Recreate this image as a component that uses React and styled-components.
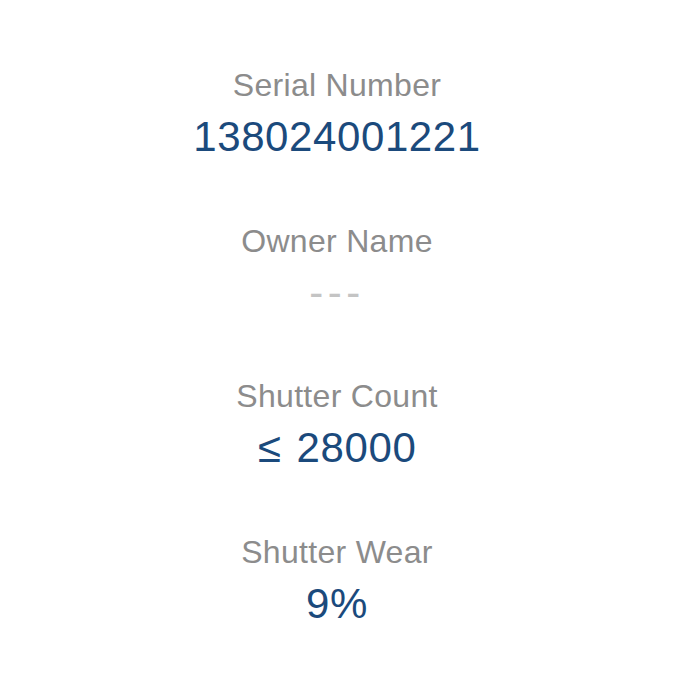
import React from "react";
import styled, { createGlobalStyle } from "styled-components";

const Global = createGlobalStyle`
  html, body {
    margin: 0;
    padding: 0;
    background: #ffffff;
  }
  body {
    font-family: "Liberation Sans", Arial, sans-serif;
    -webkit-font-smoothing: antialiased;
  }
`;

const Page = styled.main`
  width: 674px;
  min-height: 674px;
  box-sizing: border-box;
  padding-top: 66px;
  display: flex;
  flex-direction: column;
  align-items: center;
  gap: 59.5px;
  background: #ffffff;
`;

const Item = styled.section`
  display: flex;
  flex-direction: column;
  align-items: center;
  gap: 8px;
`;

const Label = styled.div`
  font-size: 32px;
  line-height: 38px;
  letter-spacing: 0.3px;
  color: #8c8c8c;
  white-space: nowrap;
`;

const Value = styled.div`
  font-size: 42px;
  line-height: 50px;
  white-space: nowrap;
  color: ${(p) => (p.$empty ? "#c4c4c4" : "#1b4a7c")};
  letter-spacing: ${(p) => (p.$empty ? "4.5px" : "0.6px")};
  word-spacing: 3px;
`;

const rows = [
  { label: "Serial Number", value: "138024001221" },
  { label: "Owner Name", value: "---", empty: true },
  { label: "Shutter Count", value: "≤ 28000" },
  { label: "Shutter Wear", value: "9%" },
];

export default function App() {
  return (
    <>
      <Global />
      <Page>
        {rows.map((r) => (
          <Item key={r.label}>
            <Label>{r.label}</Label>
            <Value $empty={r.empty}>{r.value}</Value>
          </Item>
        ))}
      </Page>
    </>
  );
}
